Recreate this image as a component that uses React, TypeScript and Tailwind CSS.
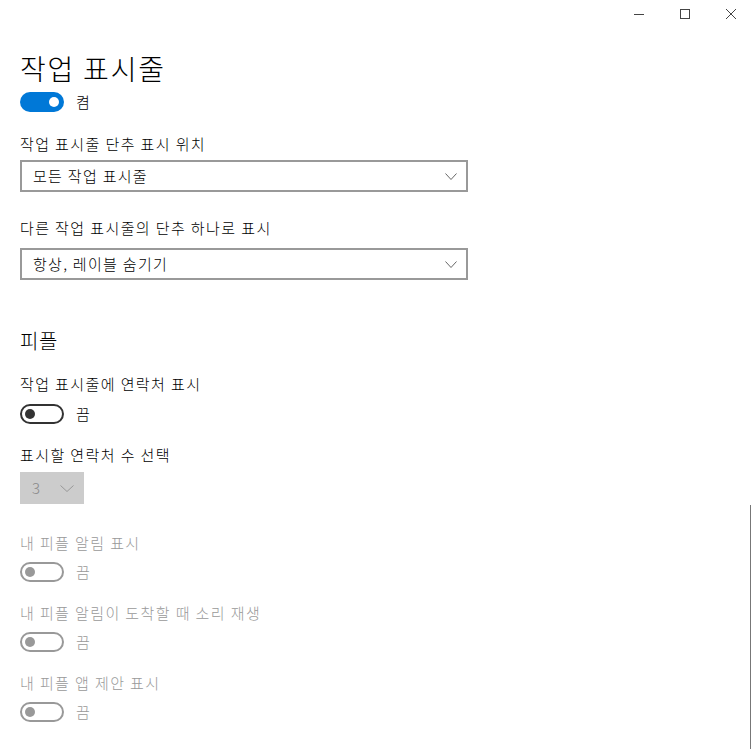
import React from "react";

const font = { fontFamily: '"Noto Sans CJK KR", "Noto Sans", sans-serif' };

function Toggle({ on, disabled }: { on?: boolean; disabled?: boolean }) {
  if (on) {
    return (
      <div className="flex h-[20px] w-[44px] items-center justify-end rounded-full bg-[#0078d7] pr-[5px]">
        <div className="h-[10px] w-[10px] rounded-full bg-white" />
      </div>
    );
  }
  const c = disabled ? "border-[#999999]" : "border-[#333333]";
  const k = disabled ? "bg-[#999999]" : "bg-[#333333]";
  return (
    <div className={`flex h-[20px] w-[44px] items-center rounded-full border-2 ${c} pl-[3px]`}>
      <div className={`h-[10px] w-[10px] rounded-full ${k}`} />
    </div>
  );
}

function ToggleRow({ on, disabled, label, className }: { on?: boolean; disabled?: boolean; label: string; className: string }) {
  return (
    <div className={`flex h-[20px] items-center gap-[12px] ${className}`}>
      <Toggle on={on} disabled={disabled} />
      <span className={`text-[15px] leading-[20px] font-light ${disabled ? "text-[#999999]" : "text-black"}`}>{label}</span>
    </div>
  );
}

function Chevron({ color, w }: { color: string; w: number }) {
  return (
    <svg width={w} height={7} viewBox={`0 0 ${w} 7`} fill="none">
      <path d={`M0.5 0.5 L${w / 2} 6.5 L${w - 0.5} 0.5`} stroke={color} strokeWidth="1" />
    </svg>
  );
}

function Select({ value, className }: { value: string; className: string }) {
  return (
    <div className={`flex h-[32px] w-[448px] items-center justify-between border-2 border-[#999999] pl-[11px] pr-[9px] ${className}`}>
      <span className="text-[15px] leading-[20px] tracking-[1.3px] font-light text-black">{value}</span>
      <Chevron color="#666666" w={12} />
    </div>
  );
}

function Label({ text, disabled, className }: { text: string; disabled?: boolean; className: string }) {
  return (
    <div className={`h-[20px] text-[15px] leading-[20px] tracking-[1.4px] font-light ${disabled ? "text-[#999999]" : "text-black"} ${className}`}>
      {text}
    </div>
  );
}

export default function App() {
  return (
    <div className="relative h-[749px] w-[751px] overflow-hidden bg-white" style={font}>
      {/* title bar */}
      <div className="flex h-[28px] items-center justify-end gap-[36px] pr-[15px]">
        <svg width="10" height="10" viewBox="0 0 10 10">
          <path d="M0 5.5 H10" stroke="#444" strokeWidth="1" />
        </svg>
        <svg width="10" height="10" viewBox="0 0 10 10">
          <rect x="0.5" y="0.5" width="9" height="9" fill="none" stroke="#444" strokeWidth="1" />
        </svg>
        <svg width="10" height="10" viewBox="0 0 10 10">
          <path d="M0 0 L10 10 M10 0 L0 10" stroke="#444" strokeWidth="1" />
        </svg>
      </div>

      <div className="flex flex-col pl-[20px]">
        <div className="mt-[20px] h-[40px] text-[28px] leading-[40px] tracking-[1.8px] font-light text-black">작업 표시줄</div>
        <ToggleRow on label="켬" className="mt-[4px]" />

        <Label text="작업 표시줄 단추 표시 위치" className="mt-[22px]" />
        <Select value="모든 작업 표시줄" className="mt-[6px]" />

        <Label text="다른 작업 표시줄의 단추 하나로 표시" className="mt-[26px]" />
        <Select value="항상, 레이블 숨기기" className="mt-[10px]" />

        <div className="mt-[47px] h-[28px] text-[20px] leading-[28px] tracking-[0.5px] font-light text-black">피플</div>

        <Label text="작업 표시줄에 연락처 표시" className="mt-[19px]" />
        <ToggleRow label="끔" className="mt-[10px]" />

        <Label text="표시할 연락처 수 선택" className="mt-[21px]" />
        <div className="mt-[7px] flex h-[32px] w-[64px] items-center justify-between bg-[#cccccc] pl-[12px] pr-[10px]">
          <span className="text-[15px] leading-[20px] font-light text-[#888888]">3</span>
          <Chevron color="#999999" w={14} />
        </div>

        <Label text="내 피플 알림 표시" disabled className="mt-[29px]" />
        <ToggleRow disabled label="끔" className="mt-[9px]" />

        <Label text="내 피플 알림이 도착할 때 소리 재생" disabled className="mt-[21px]" />
        <ToggleRow disabled label="끔" className="mt-[9px]" />

        <Label text="내 피플 앱 제안 표시" disabled className="mt-[21px]" />
        <ToggleRow disabled label="끔" className="mt-[9px]" />
      </div>

      {/* scrollbar indicator */}
      <div className="absolute right-0 top-[505px] h-[244px] w-[1px] bg-[#777777]" />
    </div>
  );
}
